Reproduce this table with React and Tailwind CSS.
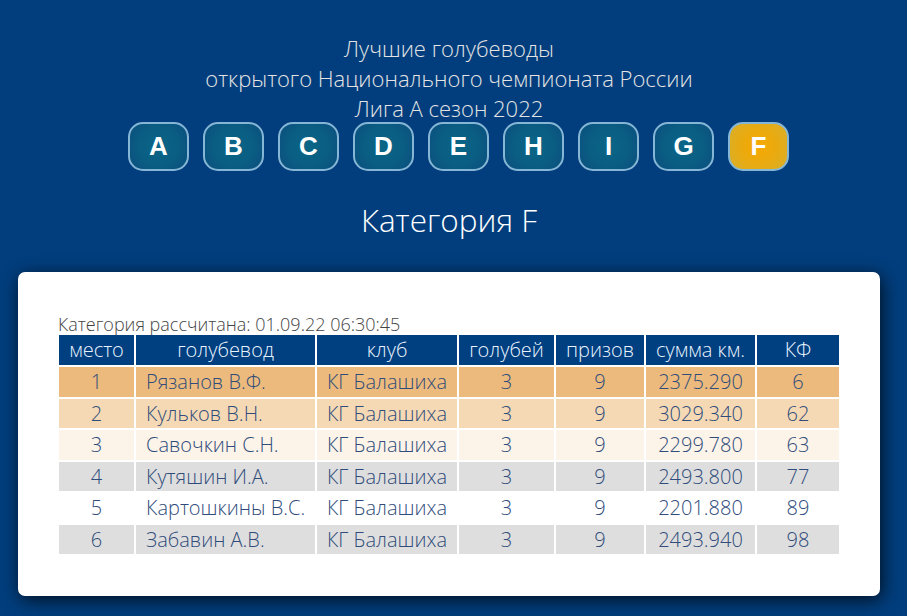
const LETTERS = ['A', 'B', 'C', 'D', 'E', 'H', 'I', 'G', 'F'];
const ACTIVE = 'F';

const COLS = [
  { label: 'место', w: 'w-[75px]', align: 'text-center' },
  { label: 'голубевод', w: 'w-[179px]', align: 'text-left pl-[10px]' },
  { label: 'клуб', w: 'w-[140px]', align: 'text-center' },
  { label: 'голубей', w: 'w-[95px]', align: 'text-center' },
  { label: 'призов', w: 'w-[88px]', align: 'text-center' },
  { label: 'сумма км.', w: 'w-[109px]', align: 'text-center' },
  { label: 'КФ', w: 'w-[82px]', align: 'text-center' },
];

const ROWS = [
  { cells: ['1', 'Рязанов В.Ф.', 'КГ Балашиха', '3', '9', '2375.290', '6'], bg: 'bg-[#ecba7d]' },
  { cells: ['2', 'Кульков В.Н.', 'КГ Балашиха', '3', '9', '3029.340', '62'], bg: 'bg-[#f5d9b5]' },
  { cells: ['3', 'Савочкин С.Н.', 'КГ Балашиха', '3', '9', '2299.780', '63'], bg: 'bg-[#fcf3e9]' },
  { cells: ['4', 'Кутяшин И.А.', 'КГ Балашиха', '3', '9', '2493.800', '77'], bg: 'bg-[#dedede]' },
  { cells: ['5', 'Картошкины В.С.', 'КГ Балашиха', '3', '9', '2201.880', '89'], bg: 'bg-white' },
  { cells: ['6', 'Забавин А.В.', 'КГ Балашиха', '3', '9', '2493.940', '98'], bg: 'bg-[#dedede]' },
];

function LetterButton({ letter }) {
  const on = letter === ACTIVE;
  return (
    <div
      className={`w-[61px] h-[49px] rounded-[15px] border-2 border-[#86b6d6] flex items-center justify-center text-white text-[26px] font-bold ${
        on
          ? 'bg-[radial-gradient(circle,#f7a900_0%,#e9aa10_50%,#d7b02c_100%)]'
          : 'bg-[radial-gradient(circle,#0a6686_0%,#0a5d83_55%,#0b4e7e_100%)]'
      }`}
      style={{ fontFamily: '"Liberation Sans", Arial, sans-serif' }}
    >
      {letter}
    </div>
  );
}

export default function App() {
  return (
    <div className="w-[907px] h-[616px] overflow-hidden bg-[#023e7d] text-[#e6e6e6]"
      style={{ fontFamily: '"Open Sans", "Noto Sans", sans-serif' }}>
      <div className="pt-[33px] pr-[9px] text-center text-[22px] leading-[30px] font-light text-[#e4e4e4]">
        <p>Лучшие голубеводы</p>
        <p>открытого Национального чемпионата России</p>
        <p>Лига А сезон 2022</p>
      </div>

      <div className="flex justify-center gap-[14px] pl-[10px] mt-[-1px]">
        {LETTERS.map(l => <LetterButton key={l} letter={l} />)}
      </div>

      <h2 className="text-center pr-[9px] text-[31.5px] leading-[40px] mt-[29px] font-light text-white">Категория F</h2>

      <div className="ml-[18px] mt-[32px] w-[862px] h-[324px] bg-white rounded-[7px] shadow-[2px_4px_18px_rgba(0,0,0,0.75)] pl-[39px] pt-[42px]">
        <p className="text-[18px] leading-[20px] font-light text-[#444] pl-[1px]">Категория рассчитана: 01.09.22 06:30:45</p>
        <table className="border-separate border-spacing-[2px] mt-[-1px] text-[20px] font-light">
          <thead>
            <tr>
              {COLS.map(c => (
                <th key={c.label} className={`${c.w} h-[30px] p-0 bg-[#003f80] text-[#e9f4ff] font-light text-center leading-[30px]`}>
                  {c.label}
                </th>
              ))}
            </tr>
          </thead>
          <tbody>
            {ROWS.map((r, i) => (
              <tr key={i}>
                {r.cells.map((v, j) => (
                  <td key={j} className={`${r.bg} ${COLS[j].align} h-[29.5px] p-0 leading-[29px] text-[#2f4c7a]`}>
                    {v}
                  </td>
                ))}
              </tr>
            ))}
          </tbody>
        </table>
      </div>
    </div>
  );
}
